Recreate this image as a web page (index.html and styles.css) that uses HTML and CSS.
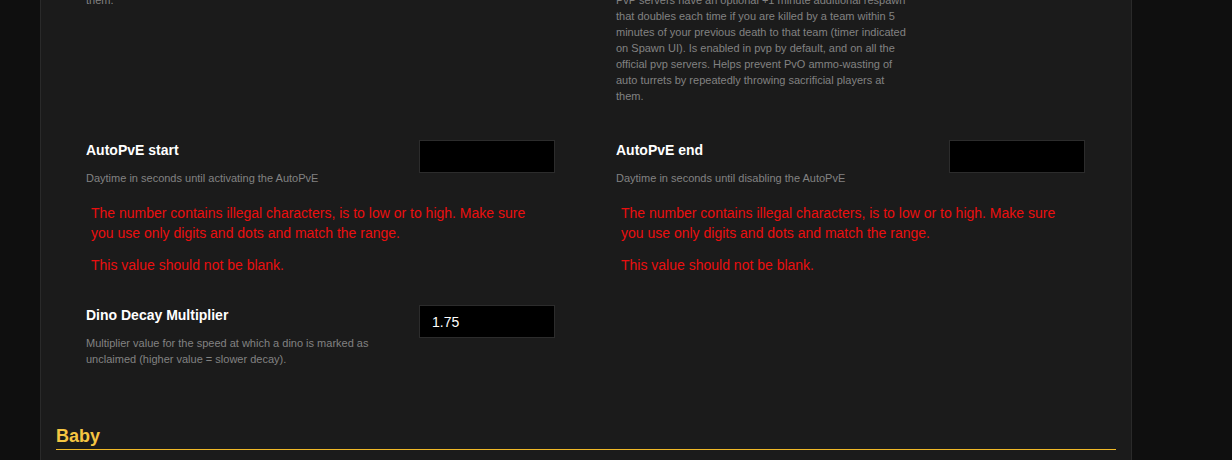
FILE: index.html
```html
<!DOCTYPE html>
<html lang="en">
<head>
<meta charset="utf-8">
<title>Server settings</title>
<link rel="stylesheet" href="styles.css">
</head>
<body>
<div class="panel">
  <div class="row row-first">
    <div class="col">
      <div class="field">
        <div class="text">
          <div class="label">Increase PvP Respawn Interval Multiplier</div>
          <div class="desc">them.</div>
        </div>
        <input class="num" type="text" value="">
      </div>
    </div>
    <div class="col">
      <div class="field">
        <div class="text">
          <div class="label">Increase PvP Respawn Interval Base Amount</div>
          <div class="desc">PvP servers have an optional +1 minute additional respawn that doubles each time if you are killed by a team within 5 minutes of your previous death to that team (timer indicated on Spawn UI). Is enabled in pvp by default, and on all the official pvp servers. Helps prevent PvO ammo-wasting of auto turrets by repeatedly throwing sacrificial players at them.</div>
        </div>
        <input class="num" type="text" value="">
      </div>
    </div>
  </div>

  <div class="row">
    <div class="col">
      <div class="field">
        <div class="text">
          <div class="label">AutoPvE start</div>
          <div class="desc">Daytime in seconds until activating the AutoPvE</div>
        </div>
        <input class="num" type="text" value="">
      </div>
      <ul class="errors">
        <li>The number contains illegal characters, is to low or to high. Make sure you use only digits and dots and match the range.</li>
        <li>This value should not be blank.</li>
      </ul>
    </div>
    <div class="col">
      <div class="field">
        <div class="text">
          <div class="label">AutoPvE end</div>
          <div class="desc">Daytime in seconds until disabling the AutoPvE</div>
        </div>
        <input class="num" type="text" value="">
      </div>
      <ul class="errors">
        <li>The number contains illegal characters, is to low or to high. Make sure you use only digits and dots and match the range.</li>
        <li>This value should not be blank.</li>
      </ul>
    </div>
  </div>

  <div class="row">
    <div class="col">
      <div class="field">
        <div class="text">
          <div class="label">Dino Decay Multiplier</div>
          <div class="desc">Multiplier value for the speed at which a dino is marked as unclaimed (higher value = slower decay).</div>
        </div>
        <input class="num" type="text" value="1.75">
      </div>
    </div>
    <div class="col"></div>
  </div>

  <h2 class="section">Baby</h2>
</div>
</body>
</html>
```

FILE: styles.css
```css
html, body {
  margin: 0;
  padding: 0;
  height: 100%;
  overflow: hidden;
}

body {
  background: #0f0f0f;
  font-family: "Liberation Sans", Arial, sans-serif;
  color: #fff;
}

.panel {
  box-sizing: border-box;
  width: 1092px;
  margin-left: 40px;
  min-height: 100%;
  padding: 0 15px 80px;
  background: #1b1b1b;
  border-left: 1px solid #2a2a2a;
  border-right: 1px solid #2a2a2a;
}

.row {
  display: flex;
  padding-bottom: 30px;
}

.row-first {
  margin-top: -38px;
}

.col {
  box-sizing: border-box;
  width: 530px;
  padding: 0 31px 0 30px;
}

.field {
  display: flex;
  align-items: flex-start;
}

.text {
  flex: 1;
  min-width: 0;
}

.label {
  font-size: 14px;
  font-weight: bold;
  line-height: 20px;
  white-space: nowrap;
  overflow: hidden;
  color: #ffffff;
}

.desc {
  width: 296px;
  margin-top: 10px;
  margin-bottom: 6px;
  font-size: 11px;
  line-height: 16px;
  color: #828282;
}

.num {
  box-sizing: border-box;
  flex: none;
  width: 136px;
  height: 33px;
  margin: 0;
  padding: 0 12px;
  background: #000;
  border: 1px solid #2c2c2c;
  color: #fff;
  font-family: "Liberation Sans", Arial, sans-serif;
  font-size: 14px;
  outline: none;
}

.errors {
  list-style: none;
  margin: 11px 0 0;
  padding: 0 8px 0 5px;
  color: #ea0f0f;
  font-size: 14px;
  line-height: 20px;
}

.errors li + li {
  margin-top: 12px;
}

.section {
  margin: 22px 0 0;
  padding-bottom: 2px;
  border-bottom: 1px solid #f0b928;
  color: #f5c542;
  font-size: 18px;
  font-weight: bold;
  line-height: 22px;
}
```
